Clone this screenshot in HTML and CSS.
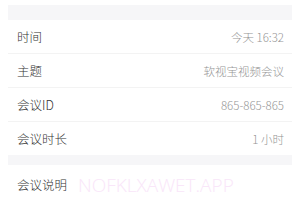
FILE: index.html
```html
<!DOCTYPE html>
<html lang="zh">
<head>
<meta charset="utf-8">
<link rel="stylesheet" href="styles.css">
</head>
<body>
<div class="page">
  <div class="band band-top"></div>
  <div class="row"><span class="label">时间</span><span class="value">今天 16:32</span></div>
  <div class="row"><span class="label">主题</span><span class="value">软视宝视频会议</span></div>
  <div class="row"><span class="label">会议ID</span><span class="value">865-865-865</span></div>
  <div class="row last"><span class="label">会议时长</span><span class="value">1 小时</span></div>
  <div class="band band-mid"></div>
  <div class="row desc"><span class="label">会议说明</span></div>
  <div class="watermark">NOFKLXAWET.APP</div>
</div>
</body>
</html>
```
FILE: styles.css
```css
html, body {
  margin: 0;
  padding: 0;
  background: #ffffff;
}
body {
  padding-top: 5px;
  font-family: "Noto Sans CJK SC", "Noto Sans", sans-serif;
}
.page {
  position: relative;
  margin: 0 5px 0 8px;
  background: #ffffff;
}
.band {
  background: #f6f6f8;
}
.band-top { height: 15px; }
.band-mid { height: 10px; }
.row {
  height: 33px;
  display: flex;
  align-items: center;
  justify-content: space-between;
  padding: 0 8px 0 9px;
  border-bottom: 1px solid #f3f3f3;
  box-sizing: content-box;
}
.row.last { border-bottom: none; }
.row.desc { height: 38px; border-bottom: none; }
.label {
  font-size: 12.5px;
  color: #333333;
  font-weight: 300;
}
.value {
  font-size: 11.5px;
  color: #959595;
  font-weight: 300;
}
.watermark {
  position: absolute;
  left: 70px;
  top: 167px;
  font-family: "Open Sans", "Liberation Sans", sans-serif;
  font-weight: 300;
  font-size: 19px;
  line-height: 26px;
  color: #f9e6f9;
  pointer-events: none;
}
```
